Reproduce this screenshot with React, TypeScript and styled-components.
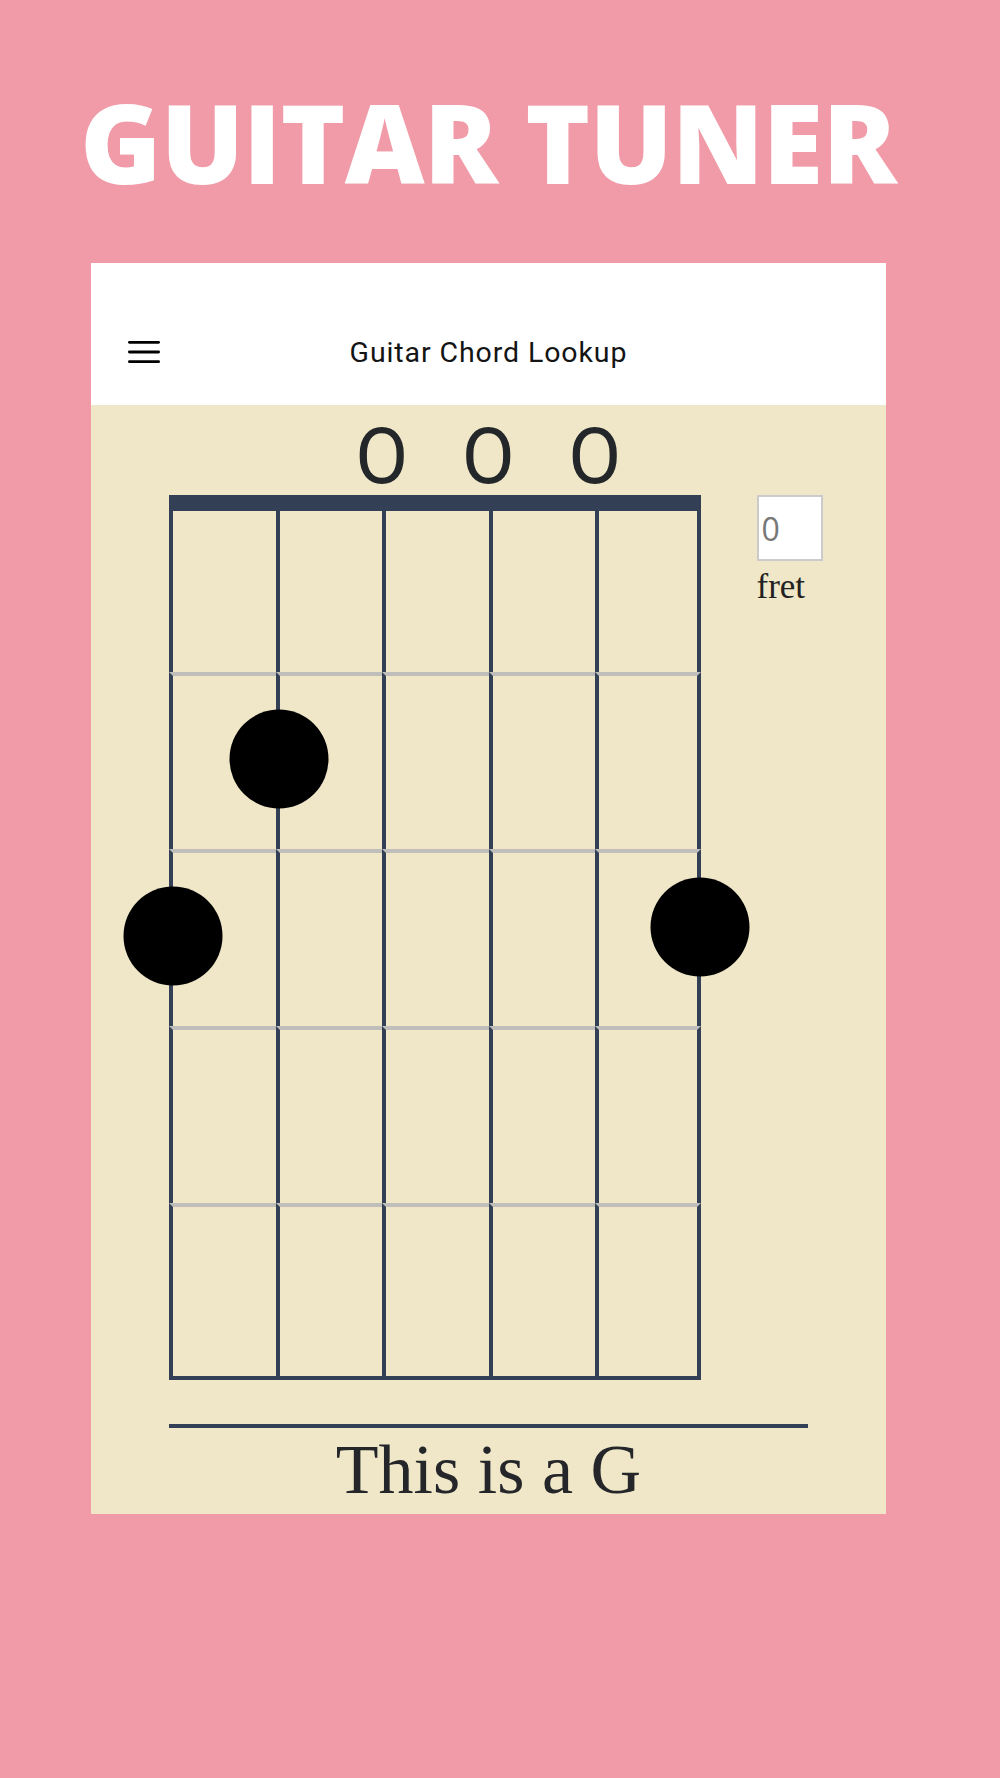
import styled, { createGlobalStyle } from 'styled-components';

interface FingerDot {
  string: number; // 0 = low E (left)
  fret: number;   // 1-based fret row
  nudge?: number; // small vertical correction, px
}

const SLATE = '#323f55';
const FRET_GRAY = '#c0bebb';
const COL_W = 106.5;
const ROW_H = 177;
const STRING_W = 4;

const chord = {
  name: 'G',
  open: [false, false, true, true, true, false],
  dots: [
    { string: 1, fret: 2 },
    { string: 0, fret: 3 },
    { string: 5, fret: 3, nudge: -9 },
  ] as FingerDot[],
};

const GlobalStyle = createGlobalStyle`
  html, body {
    margin: 0;
    padding: 0;
    background: #f09ba7;
  }
  body {
    font-family: Roboto, "Liberation Sans", sans-serif;
  }
`;

const Page = styled.div`
  min-height: 1778px;
  box-sizing: border-box;
  padding-top: 66px;
`;

const Title = styled.h1`
  margin: 0 0 47px;
  padding-left: 80px;
  font-family: "Open Sans", "Liberation Sans", sans-serif;
  font-weight: 800;
  font-size: 110px;
  line-height: 150px;
  letter-spacing: -0.8px;
  color: #fff;
  white-space: nowrap;
`;

const Card = styled.div`
  margin-left: 91px;
  width: 795px;
`;

const AppBar = styled.header`
  box-sizing: border-box;
  height: 142px;
  padding: 36px 37px 0;
  background: #fff;
`;

const Toolbar = styled.div`
  height: 106px;
  display: grid;
  grid-template-columns: 1fr auto 1fr;
  align-items: center;
`;

const MenuButton = styled.button`
  justify-self: start;
  display: flex;
  padding: 0;
  border: 0;
  background: none;
  color: #000;
`;

const AppTitle = styled.div`
  font-family: Roboto, "Liberation Sans", sans-serif;
  font-size: 28.5px;
  letter-spacing: 0.9px;
  color: #141414;
`;

const Content = styled.main`
  background: #efe7c7;
  padding: 14px 78px 3px;
`;

const OpenRow = styled.div`
  display: flex;
  height: 76px;
  margin-left: -53.5px;
`;

const OpenSlot = styled.div`
  width: ${COL_W}px;
  flex: none;
  text-align: center;
  font-family: Roboto, "Liberation Sans", sans-serif;
  font-size: 77px;
  line-height: 76px;
  color: #24272a;
`;

const BoardRow = styled.div`
  display: flex;
  align-items: flex-start;
  gap: 56px;
`;

const Board = styled.div`
  position: relative;
  width: ${COL_W * 5 - 1}px;
  flex: none;
  display: grid;
  grid-template-columns: repeat(4, ${COL_W}px) 1fr;
  grid-auto-rows: ${ROW_H}px;
`;

const Cell = styled.div<{ $nut: boolean; $lastCol: boolean; $lastRow: boolean }>`
  box-sizing: border-box;
  border-left: ${STRING_W}px solid ${SLATE};
  border-top: ${p => (p.$nut ? `16px solid ${SLATE}` : `4px solid ${FRET_GRAY}`)};
  border-right: ${p => (p.$lastCol ? `${STRING_W}px solid ${SLATE}` : '0')};
  border-bottom: ${p => (p.$lastRow ? `4px solid ${SLATE}` : '0')};
`;

const Dot = styled.span`
  position: absolute;
  width: 99px;
  height: 99px;
  border-radius: 50%;
  background: #000;
  transform: translate(-50%, -50%);
`;

const Side = styled.div`
  display: flex;
  flex-direction: column;
  align-items: flex-start;
`;

const FretInput = styled.input`
  box-sizing: border-box;
  width: 66px;
  height: 66px;
  margin: 0;
  padding: 0 0 0 3px;
  border: 2px solid #cbcbcb;
  background: #fff;
  font-family: "Open Sans", sans-serif;
  font-size: 32px;
  color: #777;
  outline: none;
`;

const FretLabel = styled.label`
  margin-top: 6px;
  font-family: "Liberation Serif", serif;
  font-size: 35px;
  line-height: 39px;
  color: #222;
`;

const Divider = styled.hr`
  margin: 44px 0 0;
  height: 4px;
  border: 0;
  background: ${SLATE};
`;

const Caption = styled.p`
  margin: 0;
  text-align: center;
  font-family: "Liberation Serif", serif;
  font-size: 70px;
  line-height: 83px;
  color: #24262a;
`;

const stringCenter = (s: number) =>
  s === 5 ? COL_W * 5 - 1 - STRING_W / 2 : s * COL_W + STRING_W / 2;

function MenuIcon() {
  return (
    <svg width="32" height="24" viewBox="0 0 32 24" fill="none" stroke="currentColor"
      strokeWidth="2.8" strokeLinecap="round">
      <line x1="1.4" y1="2.3" x2="30.6" y2="2.3" />
      <line x1="1.4" y1="12" x2="30.6" y2="12" />
      <line x1="1.4" y1="21.7" x2="30.6" y2="21.7" />
    </svg>
  );
}

export default function App() {
  const rows = [0, 1, 2, 3, 4];
  const cols = [0, 1, 2, 3, 4];

  return (
    <>
      <GlobalStyle />
      <Page>
        <Title>GUITAR TUNER</Title>
        <Card>
          <AppBar>
            <Toolbar>
              <MenuButton aria-label="menu"><MenuIcon /></MenuButton>
              <AppTitle>Guitar Chord Lookup</AppTitle>
              <span />
            </Toolbar>
          </AppBar>
          <Content>
            <OpenRow>
              {chord.open.map((isOpen, i) => (
                <OpenSlot key={i}>{isOpen ? 'O' : ''}</OpenSlot>
              ))}
            </OpenRow>
            <BoardRow>
              <Board>
                {rows.map(r =>
                  cols.map(c => (
                    <Cell key={`${r}-${c}`} $nut={r === 0} $lastCol={c === 4} $lastRow={r === 4} />
                  ))
                )}
                {chord.dots.map((d, i) => (
                  <Dot
                    key={i}
                    style={{
                      left: stringCenter(d.string) + 1.5,
                      top: (d.fret - 0.5) * ROW_H - 2 + (d.nudge ?? 0),
                    }}
                  />
                ))}
              </Board>
              <Side>
                <FretInput id="fret" type="text" defaultValue="0" />
                <FretLabel htmlFor="fret">fret</FretLabel>
              </Side>
            </BoardRow>
            <Divider />
            <Caption>This is a {chord.name}</Caption>
          </Content>
        </Card>
      </Page>
    </>
  );
}
